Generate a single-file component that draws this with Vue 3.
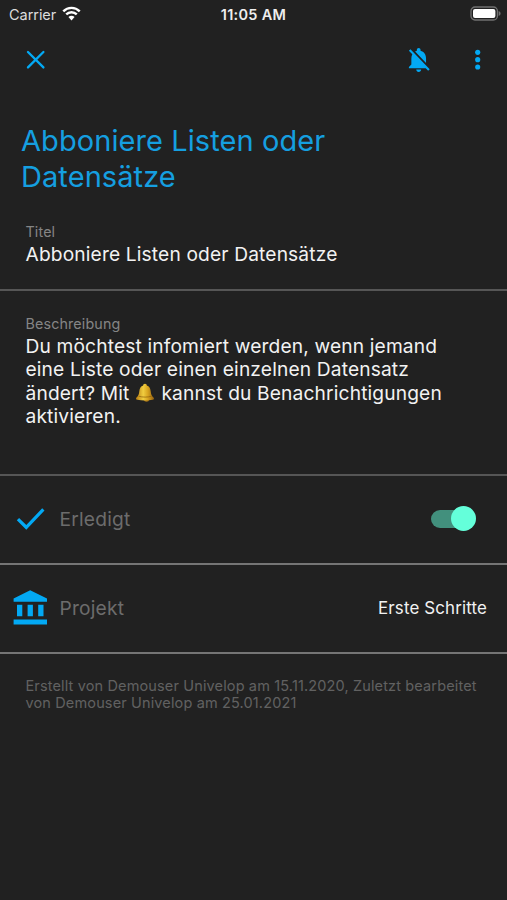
<script setup>
import { ref } from 'vue'

const title = 'Abboniere Listen oder Datensätze'
const done = ref(true)
</script>

<template>
  <main class="screen">
    <header class="status">
      <div class="carrier">
        <span class="carrier-name">Carrier</span>
        <svg class="wifi" viewBox="0 0 18 14">
          <path d="M1.2 4.9a11 11 0 0 1 15.6 0" />
          <path d="M4 7.8a7.1 7.1 0 0 1 10 0" />
          <path class="solid" d="M9 9.2a4.6 4.6 0 0 1 2.9 1.2L9 13.6l-2.9-3.2A4.6 4.6 0 0 1 9 9.2z" />
        </svg>
      </div>
      <span class="clock">11:05 AM</span>
      <svg class="battery" viewBox="0 0 31 15">
        <rect class="shell" x="1" y="1" width="26.4" height="13" rx="4" />
        <rect class="level" x="3" y="3" width="22.4" height="9" rx="2" />
        <path class="tip" d="M28.6 5v5c1.3-.5 2-1.400 2-2.500s-.7-2-2-2.500z" />
      </svg>
    </header>

    <nav class="toolbar">
      <svg class="icon close" viewBox="0 0 24 24"><path d="M5.700 5.700l12.600 12.600M18.300 5.700L5.700 18.300" /></svg>
      <div class="actions">
        <svg class="icon" viewBox="0 0 24 24">
          <path d="M20 18.690L7.840 6.140 5.270 3.490 4 4.760l2.800 2.800v.01c-.52.99-.8 2.160-.8 3.420v5l-2 2v1h13.730l2 2L21 19.720l-1-1.030zM12 22c1.110 0 2-.89 2-2h-4c0 1.110.89 2 2 2zm6-7.320V11c0-3.080-1.640-5.640-4.500-6.320V4c0-.83-.67-1.500-1.500-1.500s-1.500.67-1.500 1.500v.68c-.15.03-.29.08-.42.12-.1.03-.2.07-.3.11-.24.1-.48.21-.71.320L18 14.680z" />
        </svg>
        <svg class="icon" viewBox="0 0 24 24">
          <circle cx="12" cy="6" r="2.100" /><circle cx="12" cy="12" r="2.100" /><circle cx="12" cy="18" r="2.100" />
        </svg>
      </div>
    </nav>

    <h1 class="headline">Abboniere Listen oder<br />Datensätze</h1>

    <section class="field field-title">
      <div class="label">Titel</div>
      <div class="value">{{ title }}</div>
    </section>

    <section class="field field-text">
      <div class="label">Beschreibung</div>
      <div class="value">
        <span class="line">Du möchtest infomiert werden, wenn jemand</span>
        <span class="line">eine Liste oder einen einzelnen Datensatz</span>
        <span class="line">ändert? Mit <svg class="bell" viewBox="0 0 20 20">
          <defs>
            <linearGradient id="gold" x1="0" x2="1">
              <stop offset="0" stop-color="#b87d10" />
              <stop offset=".4" stop-color="#f0cd40" />
              <stop offset=".65" stop-color="#d9a520" />
              <stop offset="1" stop-color="#936010" />
            </linearGradient>
          </defs>
          <ellipse cx="11.500" cy="17" rx="2.500" ry="1.800" fill="#a87517" />
          <path fill="url(#gold)" d="M10 .8c1.200 0 1.800.8 1.800 1.800 2.500.8 3.600 2.900 3.900 5.600.3 3 .8 4.300 2.800 6.300.9 1 .6 2-.8 2.300-4.700 1-10.700 1-15.400 0-1.400-.3-1.700-1.300-.8-2.300 2-2 2.500-3.300 2.800-6.300.3-2.700 1.400-4.800 3.900-5.600 0-1 .6-1.800 1.800-1.800z" />
          <path fill="none" stroke="#8d5d0c" stroke-width=".7" d="M3.600 13.200c4 1.200 9 1.200 12.900 0" />
        </svg> kannst du Benachrichtigungen</span>
        <span class="line">aktivieren.</span>
      </div>
    </section>

    <section class="row">
      <svg class="lead" viewBox="0 0 40 40">
        <path d="M14.300 30.700L4.800 21.200l2.300-2.300 7.200 7.200L30.200 9.200l2.300 2.300z" />
      </svg>
      <span class="name">Erledigt</span>
      <button class="switch" :class="{ on: done }" aria-label="Erledigt" @click="done = !done"><i></i></button>
    </section>

    <section class="row">
      <svg class="lead" viewBox="0 0 40 40">
        <path d="M18.200 2.200L1.600 10.600v3.200h33.400v-3.200zM5 16.800h5.300v11.500H5zM15.600 16.800h5.300v11.500h-5.300zM26.200 16.800h5.300v11.500h-5.300zM1.600 31.500h33.400v5.100H1.600z" />
      </svg>
      <span class="name">Projekt</span>
      <span class="choice">Erste Schritte</span>
    </section>

    <footer class="meta">
      <span class="line">Erstellt von Demouser Univelop am 15.11.2020, Zuletzt bearbeitet</span>
      <span class="line">von Demouser Univelop am 25.01.2021</span>
    </footer>
  </main>
</template>

<style>
body { margin: 0; background: #212121; }
</style>

<style scoped>
.screen { box-sizing: border-box; width: 507px; height: 900px; overflow: hidden; background: #212121; color: #f2f2f2; font-family: Inter, sans-serif; }
.status { display: grid; grid-template-columns: 1fr auto 1fr; align-items: center; height: 28px; padding: 0 6px 0 9px; font-size: 14.500px; }
.carrier { display: flex; align-items: center; gap: 5.500px; color: #dcdcdc; letter-spacing: -.05px; }
.wifi { width: 19px; height: 15px; margin-top: -2px; fill: none; stroke: #fff; stroke-width: 2.300; }
.wifi .solid { fill: #fff; stroke: none; }
.clock { margin-right: 3px; font-weight: 600; color: #eee; letter-spacing: .3px; }
.battery { justify-self: end; width: 31px; height: 15px; margin-top: -2px; }
.shell { fill: none; stroke: #707070; stroke-width: 1.300; }
.level { fill: #fff; }
.tip { fill: #707070; }
.toolbar { display: flex; justify-content: space-between; align-items: center; height: 63px; padding: 0 15px 0 20.500px; }
.actions { display: flex; gap: 29px; }
.icon { width: 29.400px; height: 29.400px; fill: #03a9f4; }
.close { fill: none; stroke: #03a9f4; stroke-width: 1.900; stroke-linecap: round; }
.headline { margin: 32px 0 0 21px; font-size: 29px; line-height: 35.500px; font-weight: 400; letter-spacing: .08px; color: #159fe0; white-space: nowrap; }
.field { box-sizing: border-box; padding: 0 25.500px; border-bottom: 2px solid #565656; }
.field-title { height: 97px; padding-top: 29px; }
.field-text { height: 185px; padding-top: 24px; }
.label { font-size: 14.300px; line-height: 18px; letter-spacing: .14px; color: #858585; }
.value { margin-top: 2px; font-size: 19.200px; line-height: 23.300px; letter-spacing: .14px; }
.line { display: block; white-space: nowrap; }
.bell { width: 20px; height: 20px; margin-right: 1px; vertical-align: -3px; }
.row { box-sizing: border-box; display: flex; align-items: center; height: 89px; padding: 0 20px 2px 12px; border-bottom: 2px solid #757575; }
.lead { width: 40px; height: 40px; fill: #03a9f4; }
.name { flex: 1; margin-left: 7.500px; font-size: 19.200px; letter-spacing: .2px; color: #6c6c6c; }
.choice { font-size: 16.900px; letter-spacing: .15px; }
.switch { display: flex; align-items: center; width: 41px; height: 18px; margin-right: 15px; padding: 0; border: 0; border-radius: 9px; background: #555; }
.switch i { width: 25px; height: 25px; flex: none; border-radius: 50%; background: #bbb; }
.switch.on { justify-content: flex-end; background: #42907d; }
.switch.on i { margin-right: -4px; background: #64ffda; }
.meta { padding: 23px 25.500px; font-size: 14.500px; line-height: 17.300px; letter-spacing: .14px; color: #616161; }
</style>
